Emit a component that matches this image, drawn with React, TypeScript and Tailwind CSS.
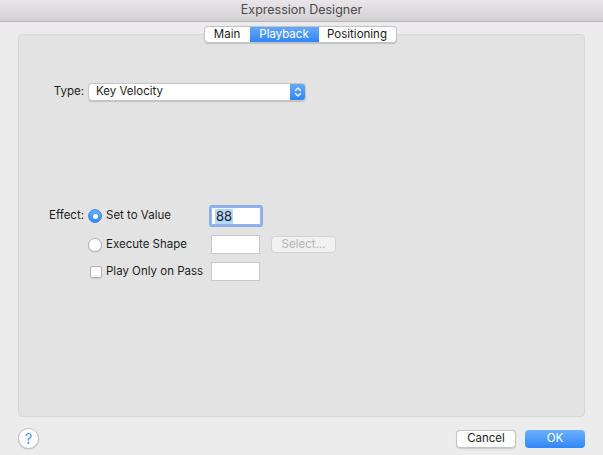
import React from "react";

const font = { fontFamily: "Inter, 'Noto Sans', 'Liberation Sans', sans-serif" };

function Radio({ checked }: { checked?: boolean }) {
  if (checked) {
    return (
      <span className="w-[14px] h-[14px] rounded-full bg-gradient-to-b from-[#69aefb] to-[#2f86f8] border border-[#3d87ef] flex items-center justify-center shrink-0">
        <span className="w-[5px] h-[5px] rounded-full bg-white" />
      </span>
    );
  }
  return <span className="w-[14px] h-[14px] rounded-full bg-white border border-[#b4b4b4] shadow-[0_0.5px_1px_rgba(0,0,0,0.15)] shrink-0" />;
}

export default function App() {
  return (
    <div className="w-[603px] h-[455px] bg-[#ececec] flex flex-col text-[11.5px] text-[#1d1d1d] overflow-hidden whitespace-nowrap" style={font}>
      <div className="h-[22px] shrink-0 bg-gradient-to-b from-[#e8e6e8] to-[#d3d1d3] border-b border-[#b4b4b4] flex items-center justify-center text-[12.5px] text-[#4b4b4b]">
        Expression Designer
      </div>
      <div className="px-[18px] flex flex-col">
        <div className="relative z-10 flex justify-center mt-[4px] pr-[3px]">
          <div className="flex h-[17px] rounded-[4px] border border-[#c3c3c3] bg-white shadow-[0_0.5px_1px_rgba(0,0,0,0.15)] overflow-hidden text-[11.5px] leading-none">
            <div className="w-[45px] flex items-center justify-center text-[#1a1a1a]">Main</div>
            <div className="w-[69px] flex items-center justify-center text-white bg-gradient-to-b from-[#66a9f9] to-[#2f86f8]">Playback</div>
            <div className="w-[77px] flex items-center justify-center text-[#1a1a1a]">Positioning</div>
          </div>
        </div>
        <div className="-mt-[9px] h-[383px] rounded-[4px] border border-[#d8d8d8] bg-[#e3e3e3] flex flex-col">
          <div className="mt-[48px] flex items-center h-[18px]">
            <div className="w-[65px] text-right">Type:</div>
            <div className="ml-[4px] w-[218px] h-[18px] flex rounded-[4px] border border-[#c6c6c6] bg-white shadow-[0_0.5px_1px_rgba(0,0,0,0.15)] overflow-hidden">
              <div className="flex-1 pl-[7px] flex items-center">Key Velocity</div>
              <div className="w-[15px] bg-gradient-to-b from-[#66a9f9] to-[#2f86f8] flex items-center justify-center">
                <svg width="8" height="12" viewBox="0 0 8 12" fill="none" stroke="white" strokeWidth="1.3" strokeLinecap="round" strokeLinejoin="round">
                  <path d="M1.5 4.5 L4 2 L6.5 4.5" />
                  <path d="M1.5 7.5 L4 10 L6.5 7.5" />
                </svg>
              </div>
            </div>
          </div>

          <div className="mt-[104px] flex flex-col">
            <div className="flex items-center h-[22px]">
              <div className="w-[65px] text-right">Effect:</div>
              <div className="ml-[4px] w-[123px] flex items-center gap-[4px]">
                <Radio checked />
                <span>Set to Value</span>
              </div>
              <div className="w-[54px] h-[22px] -ml-[2px] rounded-[3px] border-[2.5px] border-[#87aff0] flex">
                <div className="flex-1 bg-white border border-[#9fb6dc] flex items-center pl-[3px]">
                  <span className="bg-[#b3d7ff] text-[13px] leading-[15px] px-[1px]">88</span>
                </div>
              </div>
            </div>
            <div className="flex items-center h-[19px] mt-[8px]">
              <div className="w-[65px]" />
              <div className="ml-[4px] w-[123px] flex items-center gap-[4px]">
                <Radio />
                <span>Execute Shape</span>
              </div>
              <div className="w-[49px] h-[19px] bg-white border border-[#c8c8c8]" />
              <div className="ml-[11px] w-[65px] h-[17px] rounded-[4px] border border-[#d3d3d3] bg-[#f1f1f1] text-[#b4b4b4] flex items-center justify-center">
                Select...
              </div>
            </div>
            <div className="flex items-center h-[19px] mt-[8px]">
              <div className="w-[65px]" />
              <div className="ml-[4px] w-[123px] flex items-center gap-[4px]">
                <span className="ml-[2px] w-[12px] h-[12px] rounded-[3px] bg-white border border-[#b4b4b4] shadow-[0_0.5px_1px_rgba(0,0,0,0.12)] shrink-0" />
                <span>Play Only on Pass</span>
              </div>
              <div className="w-[49px] h-[19px] bg-white border border-[#c8c8c8]" />
            </div>
          </div>
        </div>
      </div>
      <div className="flex items-center px-[18px] mt-[11px]">
        <div className="w-[21px] h-[21px] rounded-full bg-white border border-[#c4c4c4] shadow-[0_0.5px_1px_rgba(0,0,0,0.2)] flex items-center justify-center text-[#4a8ef5] text-[14px] leading-none">
          ?
        </div>
        <div className="flex-1" />
        <div className="w-[60px] h-[18px] rounded-[4px] border border-[#c4c4c4] bg-white shadow-[0_0.5px_1px_rgba(0,0,0,0.15)] flex items-center justify-center">
          Cancel
        </div>
        <div className="ml-[9px] w-[60px] h-[18px] rounded-[4px] bg-gradient-to-b from-[#6cb0fa] to-[#2f86f8] text-white flex items-center justify-center">
          OK
        </div>
      </div>
    </div>
  );
}
